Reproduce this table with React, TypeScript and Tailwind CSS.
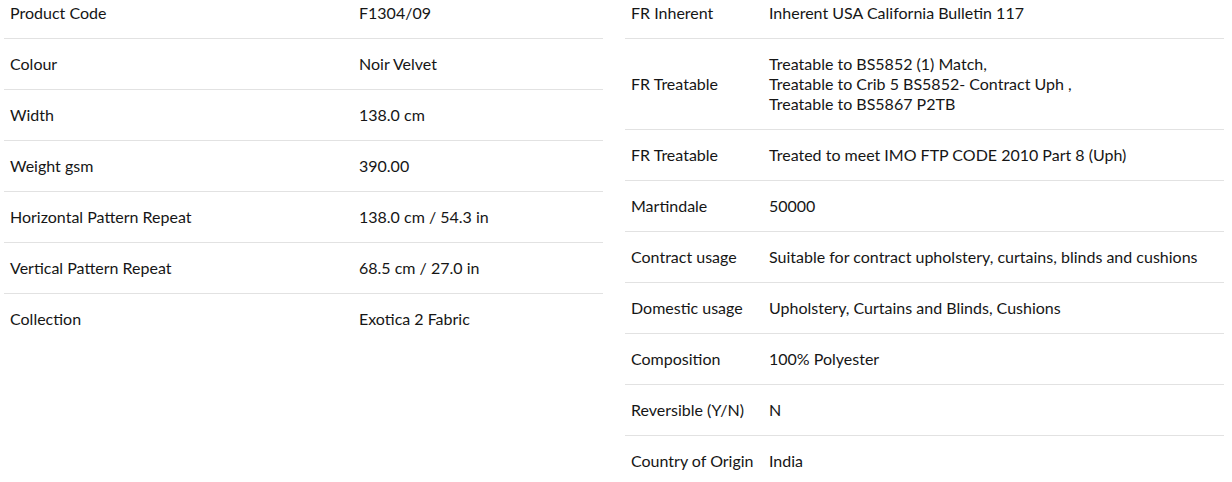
const left: [string, string][] = [
  ['Product Code', 'F1304/09'],
  ['Colour', 'Noir Velvet'],
  ['Width', '138.0 cm'],
  ['Weight gsm', '390.00'],
  ['Horizontal Pattern Repeat', '138.0 cm / 54.3 in'],
  ['Vertical Pattern Repeat', '68.5 cm / 27.0 in'],
  ['Collection', 'Exotica 2 Fabric'],
];

const right: [string, string[]][] = [
  ['FR Inherent', ['Inherent USA California Bulletin 117']],
  [
    'FR Treatable',
    [
      'Treatable to BS5852 (1) Match,',
      'Treatable to Crib 5 BS5852- Contract Uph ,',
      'Treatable to BS5867 P2TB',
    ],
  ],
  ['FR Treatable', ['Treated to meet IMO FTP CODE 2010 Part 8 (Uph)']],
  ['Martindale', ['50000']],
  ['Contract usage', ['Suitable for contract upholstery, curtains, blinds and cushions']],
  ['Domestic usage', ['Upholstery, Curtains and Blinds, Cushions']],
  ['Composition', ['100% Polyester']],
  ['Reversible (Y/N)', ['N']],
  ['Country of Origin', ['India']],
];

function SpecTable({
  rows,
  labelWidth,
}: {
  rows: [string, string[]][];
  labelWidth: string;
}) {
  return (
    <div className="flex w-[599px] flex-col">
      {rows.map(([label, values], i) => (
        <div
          key={i}
          className={`flex items-center py-[15px] ${i < rows.length - 1 ? 'border-b border-[#e2e2e2]' : ''}`}
        >
          <div className={`${labelWidth} shrink-0 px-[6px]`}>{label}</div>
          <div className="px-[6px]">
            {values.map((v, j) => (
              <div key={j}>{v}</div>
            ))}
          </div>
        </div>
      ))}
    </div>
  );
}

export default function App() {
  return (
    <div className="h-[482px] overflow-hidden bg-white">
      <div
        className="-mt-[12px] flex gap-[22px] pl-[4px] text-[16px] leading-[20px] text-[#161616]"
        style={{ fontFamily: 'Lato, "Open Sans", sans-serif' }}
      >
        <SpecTable rows={left.map(([l, v]) => [l, [v]])} labelWidth="w-[349px]" />
        <SpecTable rows={right} labelWidth="w-[138px]" />
      </div>
    </div>
  );
}
